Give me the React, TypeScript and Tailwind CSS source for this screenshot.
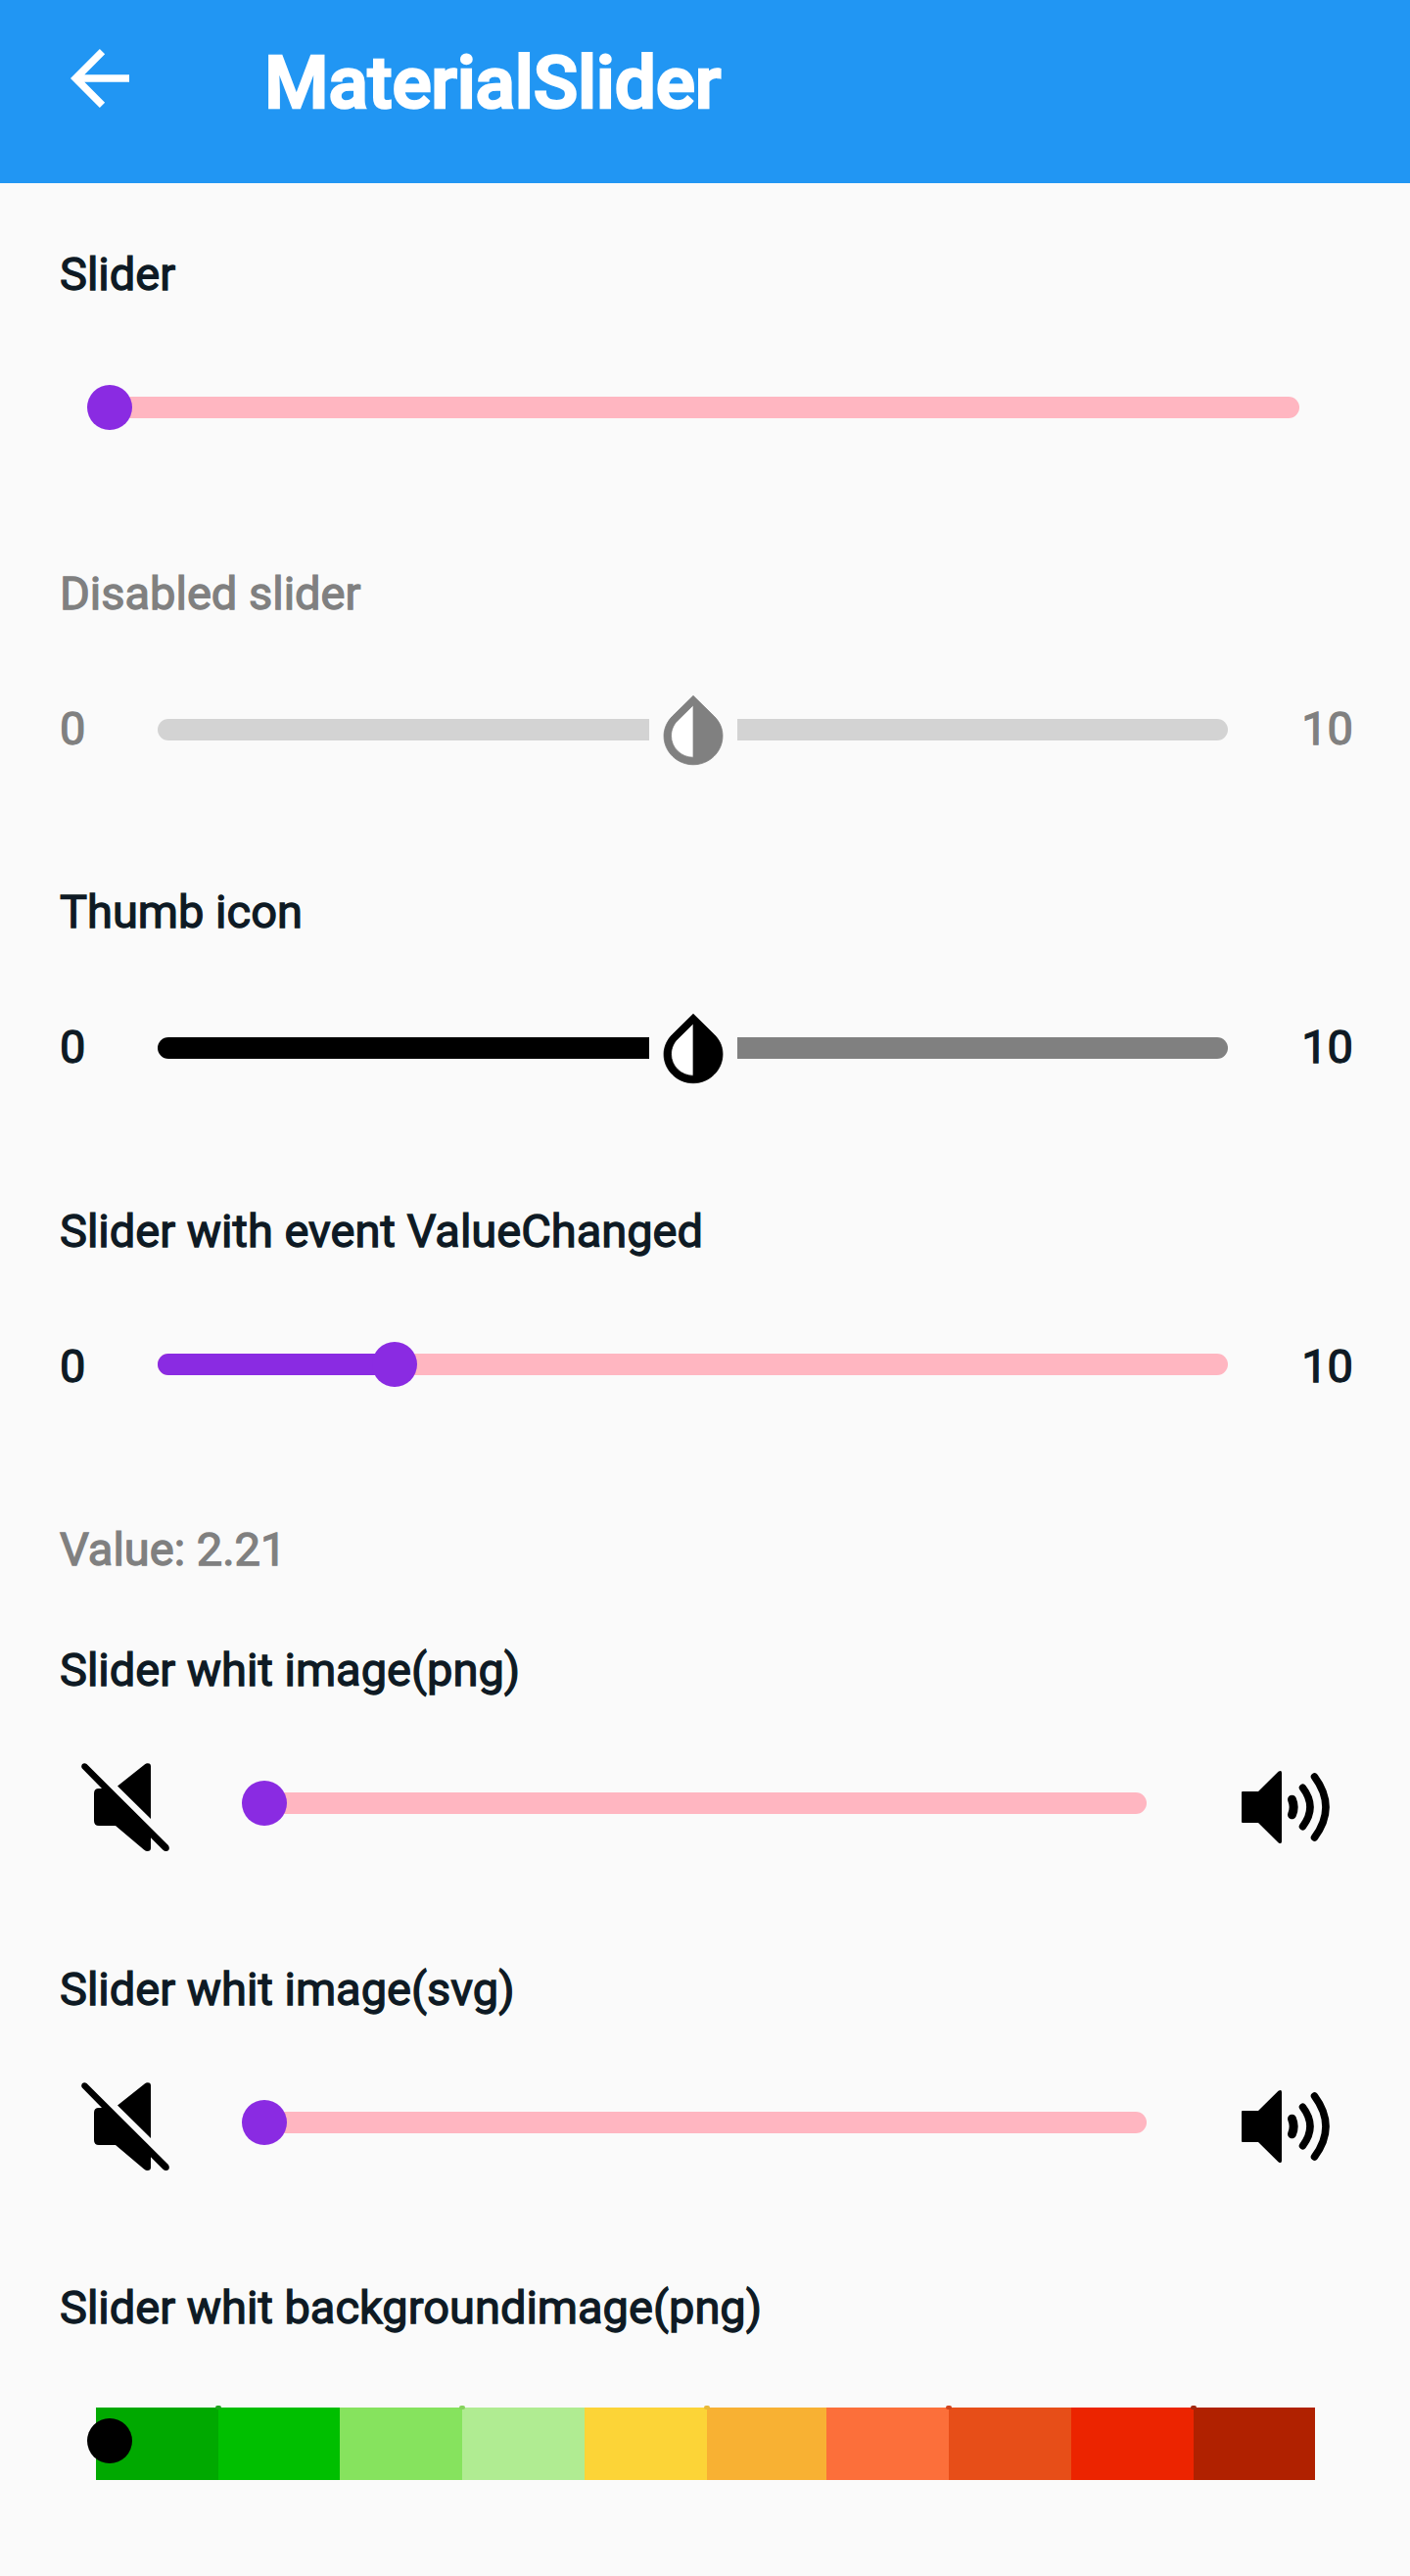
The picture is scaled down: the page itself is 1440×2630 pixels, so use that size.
import type { ReactNode } from "react";

function Section({ label, muted, height, children }: { label: string; muted?: boolean; height: string; children?: ReactNode }) {
  return (
    <section className={`flex flex-col ${height}`}>
      <h2 className={`h-[60px] pl-px text-[47px] leading-[60px] font-normal whitespace-pre [-webkit-text-stroke:1.3px_currentColor] ${muted ? "text-[#808080]" : "text-[#0e1a24]"}`}>
        {label}
      </h2>
      {children && <div className="mt-[65px] flex h-[90px] w-[1320px] items-center">{children}</div>}
    </section>
  );
}

function Bound({ children, muted, end }: { children: string; muted?: boolean; end?: boolean }) {
  return (
    <span className={`-mt-[4px] text-[47px] leading-[60px] font-normal [-webkit-text-stroke:1.3px_currentColor] ${end ? "ml-auto -mr-[2px]" : "w-[101px] pl-px"} ${muted ? "text-[#808080]" : "text-[#0e1a24]"}`}>
      {children}
    </span>
  );
}

/* A round-thumbed track; `thumb` is the distance from the track's left end to the thumb centre. */
function Track({ width, thumb }: { width: string; thumb: number }) {
  return (
    <div className={`relative -mt-[8px] h-[22px] overflow-visible rounded-full bg-[#ffb6c1] ${width}`}>
      <div className="h-full rounded-l-full bg-[#8a2be2]" style={{ width: thumb }} />
      <div className="absolute top-1/2 size-[46px] -translate-x-1/2 -translate-y-1/2 rounded-full bg-[#8a2be2]" style={{ left: thumb }} />
    </div>
  );
}

function DropTrack({ left, right, icon }: { left: string; right: string; icon: string }) {
  return (
    <div className="flex w-[1093px] items-center">
      <div className={`-mt-[2px] h-[22px] w-[502px] rounded-l-full ${left}`} />
      <svg viewBox="0 0 24 24" className={`mt-px size-[90px] ${icon}`}>
        <path d="M12 3.4L7 8.3C4.500 10.500 5 13 5 13.130 5 17 8 20 12 20z" fill="#fff" />
        <path
          fill="currentColor"
          stroke="currentColor"
          strokeWidth=".2"
          d="M12 4.810V19c-3.310 0-6-2.630-6-5.870 0-1.560.620-3.030 1.750-4.140L12 4.810M12 2.200L6.350 7.760C4.900 9.190 4 11.160 4 13.130 4 17.480 7.580 21 12 21s8-3.520 8-7.870c0-2.170-.9-3.940-2.350-5.370L12 2.200z"
        />
      </svg>
      <div className={`-mt-[2px] h-[22px] flex-1 rounded-r-full ${right}`} />
    </div>
  );
}

function MuteIcon() {
  return (
    <svg viewBox="0 0 90 90" className="ml-[23px] size-[90px]" fill="#000">
      <path d="M37 23.500 L65 1.200 Q67 -.5 69.500 .6 Q71 1.500 71 3 V57 Z" />
      <path d="M5.500 .9 L88.900 84.100 Q91 87.500 88.500 89.500 Q86 91 83.500 88.800 L71 76.300 V87 Q71 90 67.500 90 Q66 90 64 88.500 L35 64 H18 Q13 64 13 59 V31 Q13 26 18 26 H21 L.9 5.500 Q-.6 3.500 .9 1.200 Q3 -.7 5.500 .9 Z" />
    </svg>
  );
}

function VolumeIcon() {
  return (
    <svg viewBox="0 0 90 90" className="ml-auto mr-[22px] size-[90px]" fill="#000">
      <path d="M1 29 H17 L37.500 8.800 Q41 6.500 41 10 V80 Q41 83.500 37.500 81.200 L17 61 H1 Q0 61 0 60 V30 Q0 29 1 29Z" />
      <g fill="none" stroke="#000" strokeLinecap="round" strokeWidth="7.500">
        <path d="M51.500 37.200 Q54.800 45 51.500 52.800" strokeWidth="9" />
        <path d="M62.500 25.300 Q77.500 45 62.500 64.700" />
        <path d="M74.500 14 Q97.500 45 74.500 76" />
      </g>
    </svg>
  );
}

const SEGMENTS = [
  "w-[125px] bg-[#00a900]",
  "w-[124px] bg-[#00bf00]",
  "w-[125px] bg-[#86e35e]",
  "w-[125px] bg-[#b0ec92]",
  "w-[125px] bg-[#fcd437]",
  "w-[122px] bg-[#f8b133]",
  "w-[125px] bg-[#fc6f3a]",
  "w-[125px] bg-[#e74e18]",
  "w-[125px] bg-[#ec2400]",
  "w-[124px] bg-[#b02100]",
];

const TICKS = ["bg-[#1fa41f]", "bg-[#86d35e]", "bg-[#e8b93a]", "bg-[#d0431c]", "bg-[#a02810]"];

export default function App() {
  return (
    <div className="h-[2630px] w-[1440px] overflow-hidden bg-[#fafafa] font-['Roboto',sans-serif]">
      <header className="flex h-[187px] items-start bg-[#2196f3] text-white">
        <svg viewBox="0 0 60 60" className="mt-[50px] ml-[72px] size-[60px]" fill="none" stroke="currentColor" strokeWidth="7.500">
          <path d="M60 30 H7 M32.500 2.700 L5.200 30 L32.500 57.300" />
        </svg>
        <h1 className="mt-[37px] ml-[138px] text-[75px] leading-[94px] font-medium tracking-[-0.2px] [-webkit-text-stroke:2.6px_currentColor]">MaterialSlider</h1>
      </header>

      <main className="pt-[63px] pl-[60px]">
        <Section label="Slider" height="h-[326px]">
          <div className="ml-[41px] flex">
            <Track width="w-[1226px]" thumb={11} />
          </div>
        </Section>
        <Section label="Disabled slider" muted height="h-[325px]">
          <Bound muted>0</Bound>
          <DropTrack left="bg-[#d3d3d3]" right="bg-[#d3d3d3]" icon="text-[#808080]" />
          <Bound muted end>10</Bound>
        </Section>
        <Section label="Thumb icon" height="h-[326px]">
          <Bound>0</Bound>
          <DropTrack left="bg-black" right="bg-[#808080]" icon="text-black" />
          <Bound end>10</Bound>
        </Section>
        <Section label="Slider with event ValueChanged" height="h-[325px]">
          <Bound>0</Bound>
          <Track width="w-[1093px]" thumb={242} />
          <Bound end>10</Bound>
        </Section>
        <Section label="Value: 2.21" muted height="h-[123px]" />
        <Section label="Slider whit image(png)" height="h-[326px]">
          <MuteIcon />
          <div className="ml-[86px]"><Track width="w-[912px]" thumb={11} /></div>
          <VolumeIcon />
        </Section>
        <Section label="Slider whit image(svg)" height="h-[325px]">
          <MuteIcon />
          <div className="ml-[86px]"><Track width="w-[912px]" thumb={11} /></div>
          <VolumeIcon />
        </Section>
        <Section label="Slider whit backgroundimage(png)" height="h-[304px]">
          <div className="relative -mt-[3px] ml-[38px] flex h-[74px]">
            {SEGMENTS.map((s, i) => (
              <div key={s} className={`relative h-full ${s}`}>
                {i % 2 === 1 && <i className={`absolute -top-[2px] -left-[3px] h-[4px] w-[6px] rounded-sm ${TICKS[(i - 1) / 2]}`} />}
              </div>
            ))}
            <div className="absolute top-[11px] -left-[9px] size-[46px] rounded-full bg-black" />
          </div>
        </Section>
      </main>
    </div>
  );
}
